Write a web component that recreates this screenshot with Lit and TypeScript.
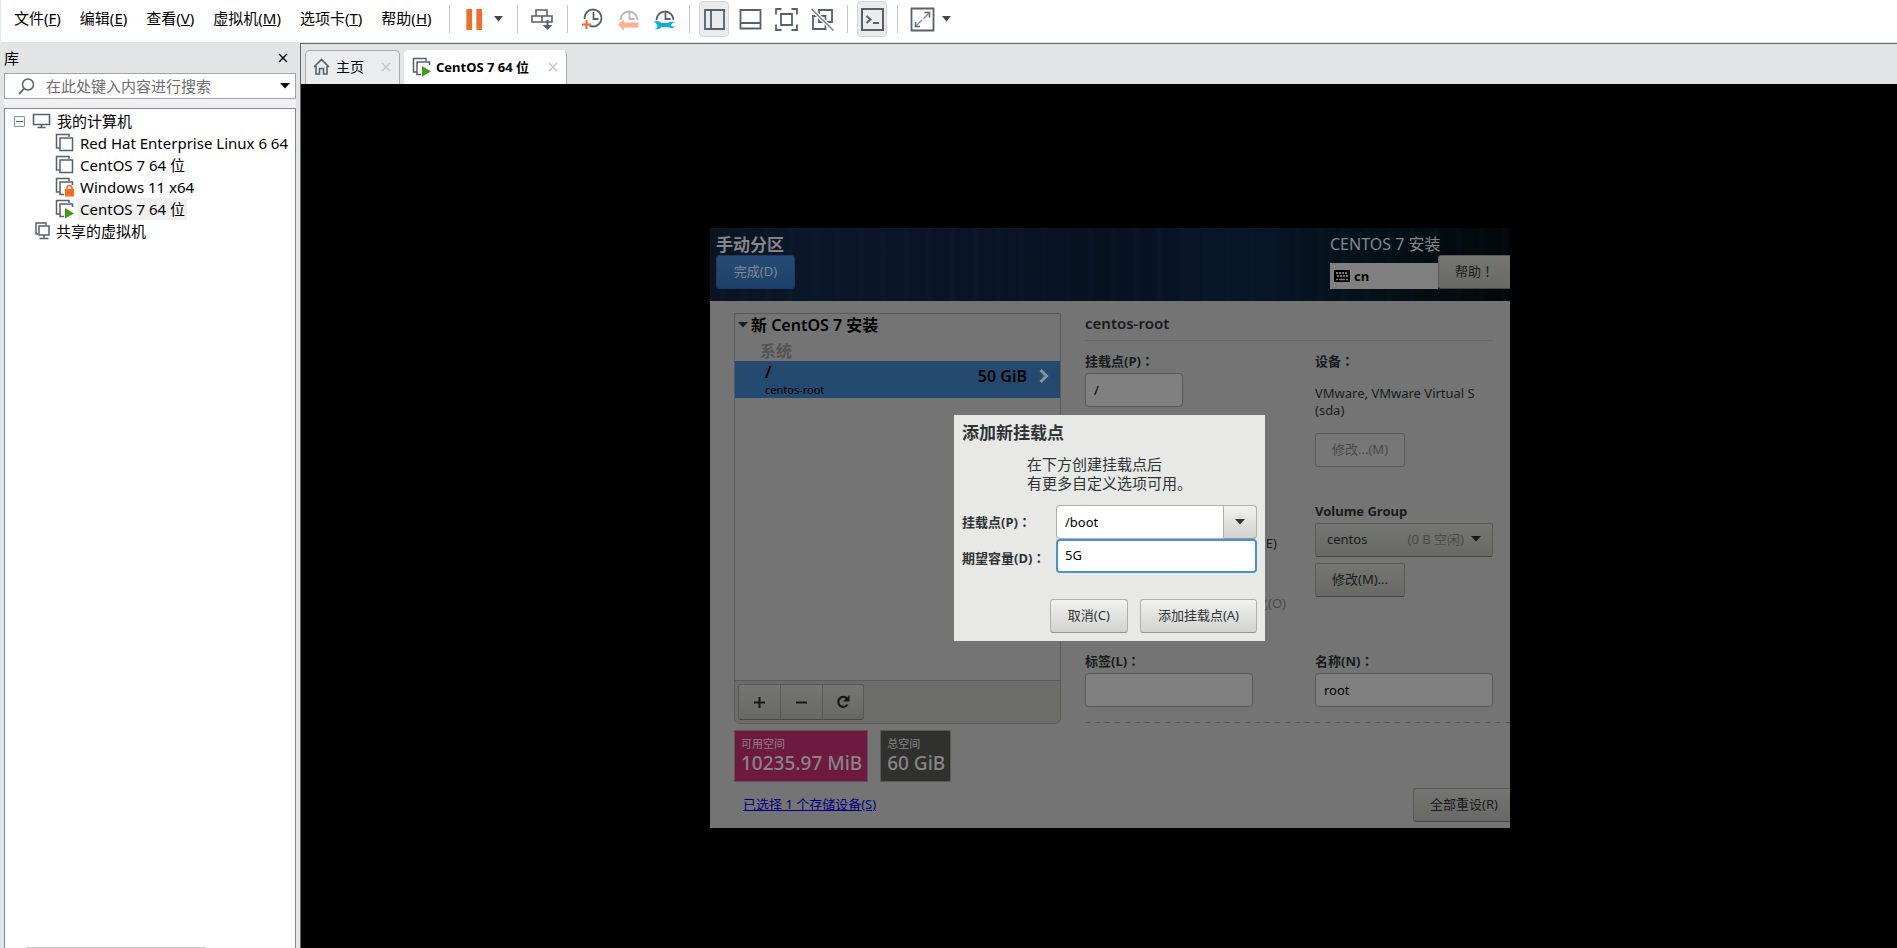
import { LitElement, html, css, svg, nothing } from "lit";
import { customElement } from "lit/decorators.js";
import { classMap } from "lit/directives/class-map.js";

const INK = "#56616b";

const clock = (color: string) => svg`
  <circle cx="13" cy="11" r="8.5" fill="none" stroke=${color} stroke-width="1.8" />
  <path d="M13.500 5v7h5" fill="none" stroke=${color} stroke-width="1.8" />`;

const halfClock = (color: string) => svg`
  <path d="M4.5 13a8.500 8.500 0 1 1 17 0" fill="none" stroke=${color} stroke-width="1.8" />
  <path d="M13.500 5v7h5" fill="none" stroke=${color} stroke-width="1.800" />`;

const vmSheets = svg`
  <path d="M5 15H1.500V1.500H14V4" fill="none" stroke="#56616b" stroke-width="1.500" />
  <rect x="5" y="5" width="12.500" height="12.500" fill="#fff" stroke="#56616b" stroke-width="1.500" />`;

const icons: Record<string, unknown> = {
  pause: svg`<path d="M4 2h6v21H4zM14 2h6v21h-6z" fill="#b9b2ac" /><path d="M5 2h5v21H5zM15 2h5v21h-5z" fill="#ff6a1c" />`,
  send: svg`
    <g fill="#fff" stroke=${INK} stroke-width="1.600">
      <path d="M6 3h11v6H6zM2 9h10v6H2zM12 9h10v6H12z" />
      <path d="M17.500 13v7" stroke-width="2" />
    </g>
    <path d="M12.500 18h10l-5 5z" fill=${INK} />`,
  snapshot: svg`${clock(INK)}
    <path d="M0 12h9.500v11H0z" fill="#fff" />
    <path d="M2 17.500h9M6.500 13v9" stroke="#f06a2c" stroke-width="2" fill="none" />`,
  revert: svg`${halfClock("#b5babf")}
    <path d="M2 17.500l6-5v3h14.500v5H8v3z" fill="#ffb08a" />`,
  manage: svg`${halfClock(INK)}
    <path d="M0 14h25v11H0z" fill="#fff" />
    <path d="M2 14.500q5-1.500 7 1.500h7q2-2 6.500-1l-3 2q-1 1.500.500 2.500h3q-2.500 3-7 .500H9.500q-2.500 3.500-7.500 1.500h2.500q2-2 0-4.500z" fill="#09b1d8" />`,
  library: svg`<g fill="none" stroke=${INK} stroke-width="1.800"><path d="M3 3h19v19H3zM9 3v19" /></g>`,
  thumbs: svg`<g fill="none" stroke=${INK} stroke-width="1.800"><path d="M2.500 3h20v18.500h-20zM2.500 16h20" /></g>`,
  full: svg`<g fill="none" stroke=${INK} stroke-width="1.800">
    <path d="M7 7h11v11H7zM2 7.500V2h5.500M17.500 2H23v5.500M23 17.500V23h-5.500M7.500 23H2v-5.500" /></g>`,
  unity: svg`<g fill="none" stroke=${INK} stroke-width="1.800">
    <path d="M9 3h13v12H9zM3 9h12.500v13H3z" /></g>
    <path d="M1 1.500L23.500 23.500" stroke="#fff" stroke-width="4" /><path d="M1.500 2l22 21.500" stroke="#7d868e" stroke-width="1.700" />`,
  console: svg`<path d="M2 2h21v21H2z" fill="none" stroke=${INK} stroke-width="2" />
    <path d="M6.500 9l4 3.500-4 3.500M13 16h6" fill="none" stroke=${INK} stroke-width="2" />`,
  expand: svg`<path d="M1.500 1.500h22v22h-22z" fill="none" stroke=${INK} stroke-width="1.800" />
    <path d="M14.500 5.500h5v5M10 19.500H5.500V15" fill="none" stroke=${INK} stroke-width="1.500" />
    <path d="M19 6L6 19" stroke="#8a9299" stroke-width="1.500" stroke-dasharray="8 2" />`,
};

@customElement("app-root")
export class AppRoot extends LitElement {
  static styles = css`
    :host {
      display: flex;
      flex-direction: column;
      height: 100vh;
      min-height: 860px;
      overflow: hidden;
      background: #e3e4e6;
      color: #000;
      font: 15px/22px "Noto Sans", "Noto Sans CJK SC", sans-serif;
    }
    * { box-sizing: border-box; }
    button, input, select { font: inherit; color: inherit; margin: 0; }
    button { padding: 0; border: 0; background: none; }
    svg { display: block; flex: none; }
    ul { list-style: none; margin: 0; padding: 0; }

    .menubar {
      display: flex;
      align-items: center;
      flex: none;
      height: 42px;
      padding: 0 0 4px 13px;
      margin-left: 1px;
      background: #fff;
    }
    .menus { display: flex; gap: 19px; width: 425px; padding-bottom: 2px; white-space: nowrap; }
    .sep { width: 1px; height: 28px; margin: 0 9px 0 10px; background: #c6c6c6; }
    .tools { display: flex; gap: 6px; }
    .tool {
      display: grid;
      place-items: center;
      width: 30px;
      height: 36px;
      border-radius: 4px;
    }
    .tool.on { background: #eaebed; border: 1px solid #d4d6d8; }
    .caret { display: grid; place-items: center; width: 18px; height: 36px; }

    .work { display: flex; flex: 1; min-height: 0; }
    .side {
      display: flex;
      flex-direction: column;
      width: 300px;
      flex: none;
      padding: 0 4px;
    }
    .sidehead {
      display: flex;
      justify-content: space-between;
      align-items: center;
      height: 31px;
      padding-right: 8px;
    }
    .search {
      display: flex;
      align-items: center;
      height: 26px;
      width: 292px;
      padding: 0 5px 0 13px;
      border: 1px solid #a0a3a8;
      background: #fff;
    }
    .search input {
      flex: 1;
      min-width: 0;
      padding: 0 0 0 11px;
      border: 0;
      outline: 0;
      background: none;
    }
    .search input::placeholder { color: #6d6d6d; opacity: 1; }
    .gap { height: 9px; background: #f0f0f0; flex: none; width: 292px; }
    .tree {
      flex: 1;
      width: 292px;
      padding: 1px 0 0 9px;
      border: 1px solid #828790;
      border-bottom: 0;
      background: #fff;
      overflow: hidden;
      display: flex;
      flex-direction: column;
      justify-content: space-between;
    }
    .node { display: flex; align-items: center; height: 22px; white-space: nowrap; }
    .node span { padding: 0 2px; }
    .root svg { margin: 0 3px 0 7px; }
    .shared { padding-left: 21px; }
    .shared svg { margin-right: 4px; }
    .leaf { padding-left: 41px; }
    .leaf svg { margin-right: 3px; }
    .leaf.sel span { background: #f0f0f0; }
    .twisty {
      display: flex;
      align-items: center;
      justify-content: center;
      width: 11px;
      height: 11px;
      flex: none;
      border: 1px solid #919191;
      border-radius: 1px;
      background: #f6f6f6;
    }
    .root .twisty svg { margin: 0; }
    .hbar { height: 1px; width: 178px; margin-left: 13px; background: #c8c8c8; }

    .main {
      display: flex;
      flex-direction: column;
      flex: 1;
      min-width: 0;
      margin-top: 1px;
      border-top: 1px solid #646667;
      border-left: 1px solid #646667;
      background: #000;
    }
    .tabs {
      display: flex;
      align-items: flex-end;
      gap: 4px;
      flex: none;
      height: 40px;
      padding-left: 4px;
      background: #e3e4e6;
    }
    .tab {
      display: flex;
      align-items: center;
      height: 34px;
      padding: 0 8px 2px 7px;
      border: 1px solid #a9acb0;
      border-bottom: 0;
      border-radius: 5px 5px 0 0;
      background: #ebecee;
      white-space: nowrap;
    }
    .tab span { margin: 0 17px 0 6px; font-size: 14px; }
    .tab.active { background: #fff; border-left-color: #fff; border-top-color: #fff; }
    .tab.active span { margin: 0 19px 0 4px; font-size: 13px; font-weight: 700; }
    .display {
      display: grid;
      place-items: center;
      flex: 1;
      padding: 24px 0 0 22px;
    }

    /* guest display */
    .guest {
      position: relative;
      display: flex;
      flex-direction: column;
      width: 800px;
      height: 600px;
      overflow: hidden;
      background: #747474;
      color: #181b1c;
      font-size: 13px;
      line-height: 18px;
      white-space: nowrap;
    }
    .mark { font-family: "Noto Sans CJK TC", sans-serif; }
    .banner {
      display: flex;
      justify-content: space-between;
      height: 73px;
      flex: none;
      padding: 5px 0 12px 6px;
      color: #848688;
      background:
        repeating-linear-gradient(90deg, rgba(30, 60, 100, 0) 0 9px, rgba(30, 60, 100, 0.05) 11px 13px, rgba(30, 60, 100, 0) 17px 23px),
        linear-gradient(90deg, #0c1322 0%, #0b172a 12%, #091526 30%, #071221 50%, #071629 65%, #041118 84%, #010809 100%);
    }
    .banner h1 { margin: 0; padding-top: 1px; font-size: 17px; line-height: 21px; font-weight: 700; }
    .brand { font-size: 16px; line-height: 22px; }
    .brandcol { width: 180px; }
    .btn {
      height: 34px;
      padding: 0 16px 2px;
      border: 1px solid #595956;
      border-bottom-color: #484845;
      border-radius: 3px;
      background: linear-gradient(#757573, #686865);
      color: #181b1c;
    }
    .btn.primary {
      width: 79px;
      border-color: #1a3c62;
      background: linear-gradient(#264c76, #1b4069);
      color: #84898f;
    }
    .btn.help { width: 72px; padding: 0 0 2px; border-right: 0; border-radius: 3px 0 0 3px; }
    .btn.off { color: #484a4a; border-color: #5c5c5c; background: #777; }
    .btn.reset { padding: 0 0 2px 16px; width: 97px; text-align: left; border-right: 0; border-radius: 3px 0 0 3px; }
    .kbrow { display: flex; align-items: flex-end; height: 34px; }
    .kb {
      display: flex;
      align-items: center;
      gap: 4px;
      width: 108px;
      height: 26px;
      padding-left: 4px;
      background: #808080;
      color: #000;
      font-weight: 700;
    }
    .content {
      display: grid;
      grid-template-columns: 327px 1fr;
      column-gap: 24px;
      flex: 1;
      padding: 12px 0 6px 24px;
    }
    .left { display: flex; flex-direction: column; }
    .parts {
      display: flex;
      flex-direction: column;
      height: 411px;
      border: 1px solid #5a5a5a;
      border-radius: 0 0 6px 6px;
    }
    .partlist { flex: 1; color: #000; font-size: 16px; font-weight: 600; line-height: 22px; }
    .group { display: flex; align-items: center; gap: 3px; height: 21px; padding-left: 3px; }
    .kind { height: 26px; padding-left: 25px; color: #545454; line-height: 32px; }
    .part {
      display: grid;
      grid-template-columns: 1fr auto 8px;
      column-gap: 12px;
      align-items: center;
      height: 37px;
      padding: 0 13px 0 30px;
      background: #254a6f;
    }
    .part .size { padding-bottom: 8px; }
    .part svg { margin-bottom: 8px; }
    .part .name { line-height: 20px; }
    .part small { display: block; font-size: 11px; line-height: 15px; font-weight: 400; }
    .bar {
      display: flex;
      height: 43px;
      padding: 3px;
      border-top: 1px solid #5a5a5a;
      border-radius: 0 0 5px 5px;
      background: #6c6c69;
    }
    .bar .btn { display: grid; place-items: center; width: 42px; height: 36px; padding: 0; border-radius: 0; border-right-width: 0; }
    .bar .btn:first-child { border-radius: 3px 0 0 3px; }
    .bar .btn:last-child { border-radius: 0 3px 3px 0; border-right-width: 1px; }
    .space { display: flex; gap: 12px; margin-top: 6px; color: #868686; }
    .stat { height: 52px; padding: 5px 5px 5px 6px; border: 1px solid #5d5658; background: #6e193e; }
    .stat.total { background: #30302e; border-color: #5a5a5a; }
    .stat b { display: block; font-size: 19px; line-height: 22px; font-weight: 500; }
    .stat small { display: block; font-size: 11px; line-height: 16px; }
    .link { margin: 13px 0 0 9px; width: max-content; color: #000080; font-size: 13px; }

    .right { display: flex; flex-direction: column; }
    .right h2 {
      margin: 0 17px 0 0;
      height: 28px;
      border-bottom: 1px solid #686868;
      font-size: 15px;
      line-height: 20px;
      font-weight: 600;
    }
    .cols { display: grid; grid-template-columns: 230px 178px; height: 366px; padding-top: 11px; }
    .col { display: flex; flex-direction: column; align-items: flex-start; }
    .lab { font-weight: 700; font-size: 13px; line-height: 18px; height: 21px; }
    .entry {
      height: 34px;
      padding: 0 8px;
      border: 1px solid #595959;
      border-radius: 4px;
      background: #808080;
      color: #000;
      outline: 0;
    }
    .w98 { width: 98px; }
    .w168 { width: 168px; }
    .wfull { width: 100%; }
    .opt { display: flex; align-items: center; justify-content: flex-end; height: 20px; }
    .opt.enc { width: 192px; margin-top: 100px; }
    .opt.fmt { width: 201px; margin-top: 40px; color: #4a4c4c; }
    .opt input { width: 12px; height: 12px; margin-right: 6px; }
    .device { margin: 12px 0 14px; line-height: 17px; }
    .desired { margin-top: 5px; }
    .tail { margin-top: auto; }
    .vg { margin: 35px 0 6px; width: 100%; }
    .combo { display: flex; align-items: center; width: 100%; padding: 0 11px 2px; }
    .combo em { margin: 0 7px 0 auto; font-style: normal; color: #4b4c4c; }
    .rule {
      height: 1px;
      margin-top: 15px;
      background: repeating-linear-gradient(90deg, #575757 0 5px, transparent 5px 10px);
    }
    .resetrow { display: flex; justify-content: flex-end; margin-top: auto; }

    .dialog {
      position: absolute;
      left: 244px;
      top: 187px;
      width: 311px;
      height: 226px;
      padding: 8px;
      background: #e8e8e6;
      color: #2e3436;
    }
    .dialog h3 { margin: 0; font-size: 17px; line-height: 20px; font-weight: 700; }
    .dialog p { margin: 12px 0 12px 65px; font-size: 15px; line-height: 19px; }
    .line { display: grid; grid-template-columns: 94px 1fr; align-items: center; }
    .line label { font-weight: 700; font-size: 13px; }
    .line .low { padding-top: 4px; }
    .pick { display: flex; }
    .dialog .entry { min-width: 0; width: 100%; background: #fff; border-color: #b0b1ae; }
    .pick .entry { border-radius: 4px 0 0 4px; border-right: 0; }
    .dialog .entry.focus { border: 2px solid #4a90d9; padding: 0 7px 2px; }
    .dialog .btn { border-color: #b0b1ae; border-bottom-color: #949592; background: linear-gradient(#f1f1f0, #d2d2cf); color: #2e3436; }
    .pick .btn { display: grid; place-items: center; width: 34px; padding: 0; flex: none; border-radius: 0 4px 4px 0; }
    .acts { display: flex; justify-content: flex-end; gap: 12px; margin-top: 26px; }
    .acts .btn { padding: 0 17px 2px; }
  `;

  private icon(name: string) {
    return html`<svg width="25" height="25" viewBox="0 0 25 25" aria-hidden="true">${icons[name]}</svg>`;
  }

  private tool(name: string, label: string, on = false) {
    return html`<button class=${classMap({ tool: true, on })} aria-label=${label}>${this.icon(name)}</button>`;
  }

  private caret(label: string) {
    return html`<button class="caret" aria-label=${label}>
      <svg width="9" height="6" viewBox="0 0 9 6"><path d="M0 0h9L4.500 5.500z" fill="#3f4a55" /></svg>
    </button>`;
  }

  private arrow(color: string) {
    return html`<svg width="10" height="6" viewBox="0 0 10 6"><path d="M0 0h10L5 5.500z" fill=${color} /></svg>`;
  }

  /** Full-width punctuation, centred in its box as the guest's font draws it. */
  private mark(ch: string) {
    return html`<span class="mark" lang="zh-TW">${ch}</span>`;
  }

  private vmIcon(state?: string) {
    return html`<svg width="20" height="20" viewBox="0 0 20 20" aria-hidden="true">
      ${vmSheets}
      ${state === "run" ? svg`<path d="M9 8h10v12H9z" fill="#fff" /><path d="M10 9l9 5.500-9 5z" fill="#3f9c14" />` : nothing}
      ${state === "lock"
        ? svg`<path d="M9 8h10v12H9z" fill="#fff" /><path d="M10 12h9v7.500h-9z" fill="#ff6a1c" />
            <path d="M12 12.500v-1.500a2.500 2.500 0 0 1 5 0v1.500" fill="none" stroke="#ff6a1c" stroke-width="1.500" />`
        : nothing}
    </svg>`;
  }

  private cross(color: string, size: number) {
    return html`<svg width=${size} height=${size} viewBox="0 0 10 10">
      <path d="M1 1l8 8M9 1l-8 8" fill="none" stroke=${color} stroke-width="1.400" />
    </svg>`;
  }

  private menu() {
    const items = [
      ["文件", "F"], ["编辑", "E"], ["查看", "V"], ["虚拟机", "M"], ["选项卡", "T"], ["帮助", "H"],
    ];
    return html`<header class="menubar" lang="zh-CN">
      <nav class="menus">${items.map(([t, k]) => html`<button>${t}(<u>${k}</u>)</button>`)}</nav>
      <i class="sep"></i>
      ${this.tool("pause", "挂起")}${this.caret("电源选项")}
      <i class="sep"></i>
      ${this.tool("send", "发送 Ctrl+Alt+Del")}
      <i class="sep"></i>
      <div class="tools">
        ${this.tool("snapshot", "拍摄快照")}${this.tool("revert", "恢复快照")}${this.tool("manage", "管理快照")}
      </div>
      <i class="sep"></i>
      <div class="tools">
        ${this.tool("library", "显示库", true)}${this.tool("thumbs", "缩略图栏")}${this.tool("full", "全屏")}${this.tool("unity", "Unity")}
      </div>
      <i class="sep"></i>
      ${this.tool("console", "控制台视图", true)}
      <i class="sep"></i>
      ${this.tool("expand", "自由拉伸")}${this.caret("拉伸选项")}
    </header>`;
  }

  private sidebar() {
    const vms: [string, string?][] = [
      ["Red Hat Enterprise Linux 6 64"],
      ["CentOS 7 64 位"],
      ["Windows 11 x64", "lock"],
      ["CentOS 7 64 位", "run"],
    ];
    return html`<aside class="side">
      <div class="sidehead"><span>库</span><button aria-label="关闭库">${this.cross("#000", 10)}</button></div>
      <div class="search">
        <svg width="17" height="17" viewBox="0 0 17 17">
          <circle cx="10" cy="6.500" r="5.500" fill="none" stroke="#56616b" stroke-width="1.500" />
          <path d="M6 10.500L1 16" stroke="#56616b" stroke-width="1.800" />
        </svg>
        <input type="search" aria-label="搜索" placeholder="在此处键入内容进行搜索" />
        <button aria-label="搜索选项">${this.arrow("#000")}</button>
      </div>
      <div class="gap"></div>
      <div class="tree">
        <ul>
          <li>
            <div class="node root">
              <button class="twisty" aria-label="折叠"><svg width="7" height="1"><path d="M0 0h7v1H0z" fill="#4a62a8" /></svg></button>
              <svg width="20" height="16" viewBox="0 0 20 16">
                <path d="M1.500 1.500h16v10h-16z" fill="none" stroke="#56616b" stroke-width="1.600" />
                <path d="M9.500 11.500V14M5.500 14.500h8" stroke="#56616b" stroke-width="1.600" />
              </svg>
              <span>我的计算机</span>
            </div>
            <ul>
              ${vms.map(([name, state]) => html`<li class=${classMap({ node: true, leaf: true, sel: state === "run" })}>
                ${this.vmIcon(state)}<span>${name}</span>
              </li>`)}
            </ul>
          </li>
          <li class="node shared">
            <svg width="15" height="18" viewBox="0 0 15 18">
              <path d="M3 12H1V1h10v2M4 4h10v9H4zM9 13v3M4.500 16.500h9" fill="none" stroke="#56616b" stroke-width="1.500" />
            </svg>
            <span>共享的虚拟机</span>
          </li>
        </ul>
        <div class="hbar"></div>
      </div>
    </aside>`;
  }

  private tabs() {
    return html`<div class="tabs">
      <div class="tab">
        <svg width="17" height="17" viewBox="0 0 17 17">
          <path d="M1 9L8.500 1.500 16 9M3 8v8h3.500v-5.500h4V16H14V8" fill="none" stroke="#56616b" stroke-width="1.600" />
        </svg>
        <span>主页</span>
        <button aria-label="关闭">${this.cross("#c3c4c6", 10)}</button>
      </div>
      <div class="tab active">
        ${this.vmIcon("run")}
        <span>CentOS 7 64 位</span>
        <button aria-label="关闭">${this.cross("#c3c4c6", 10)}</button>
      </div>
    </div>`;
  }

  private partitions() {
    return html`<section class="left">
      <div class="parts">
        <div class="partlist">
          <div class="group">${this.arrow("#1a1e20")}<span>新 CentOS 7 安装</span></div>
          <div class="kind">系统</div>
          <div class="part">
            <div class="name">/<small>centos-root</small></div>
            <span class="size">50 GiB</span>
            <svg width="10" height="16" viewBox="0 0 10 16"><path d="M1.500 2l6 6-6 6" fill="none" stroke="#8b9299" stroke-width="3" /></svg>
          </div>
        </div>
        <div class="bar">
          <button class="btn" aria-label="添加"><svg width="11" height="11"><path d="M0 5.500h11M5.500 0v11" stroke="#141818" stroke-width="2" /></svg></button>
          <button class="btn" aria-label="删除"><svg width="11" height="11"><path d="M0 5.500h11" stroke="#141818" stroke-width="2" /></svg></button>
          <button class="btn" aria-label="刷新">
            <svg width="14" height="14" viewBox="0 0 14 14">
              <path d="M11.500 9.500a5 5 0 1 1-.500-6" fill="none" stroke="#141818" stroke-width="2.200" />
              <path d="M13.500 0v6.500H7z" fill="#141818" />
            </svg>
          </button>
        </div>
      </div>
      <div class="space">
        <div class="stat"><small>可用空间</small><b>10235.97 MiB</b></div>
        <div class="stat total"><small>总空间</small><b>60 GiB</b></div>
      </div>
      <a class="link" href="#">已选择 1 个存储设备(S)</a>
    </section>`;
  }

  private details() {
    return html`<section class="right">
      <h2>centos-root</h2>
      <div class="cols">
        <div class="col">
          <label class="lab" for="mp">挂载点(P)${this.mark("：")}</label>
          <input class="entry w98" id="mp" value="/" />
          <span class="lab desired">期望容量(D)${this.mark("：")}</span>
          <label class="opt enc"><input type="checkbox" />(E)</label>
          <label class="opt fmt"><input type="checkbox" disabled />化(O)</label>
          <label class="lab tail" for="tag">标签(L)${this.mark("：")}</label>
          <input class="entry w168" id="tag" />
        </div>
        <div class="col">
          <span class="lab">设备${this.mark("：")}</span>
          <div class="device">VMware, VMware Virtual S<br />(sda)</div>
          <button class="btn off" disabled>修改...(M)</button>
          <div class="vg">
            <div class="lab">Volume Group</div>
            <button class="btn combo">centos<em>(0 B 空闲)</em>${this.arrow("#141818")}</button>
          </div>
          <button class="btn">修改(M)...</button>
          <label class="lab tail" for="nm">名称(N)${this.mark("：")}</label>
          <input class="entry wfull" id="nm" value="root" />
        </div>
      </div>
      <div class="rule"></div>
      <div class="resetrow"><button class="btn reset">全部重设(R)</button></div>
    </section>`;
  }

  private dialog() {
    return html`<div class="dialog" role="dialog" aria-labelledby="dt">
      <h3 id="dt">添加新挂载点</h3>
      <p>在下方创建挂载点后<br />有更多自定义选项可用。</p>
      <div class="line">
        <label for="nmp">挂载点(P)${this.mark("：")}</label>
        <div class="pick">
          <input class="entry" id="nmp" value="/boot" />
          <button class="btn" aria-label="选择挂载点">${this.arrow("#2e3436")}</button>
        </div>
      </div>
      <div class="line">
        <label class="low" for="cap">期望容量(D)${this.mark("：")}</label>
        <input class="entry focus" id="cap" value="5G" />
      </div>
      <div class="acts">
        <button class="btn">取消(C)</button>
        <button class="btn">添加挂载点(A)</button>
      </div>
    </div>`;
  }

  render() {
    return html`
      ${this.menu()}
      <div class="work" lang="zh-CN">
        ${this.sidebar()}
        <main class="main">
          ${this.tabs()}
          <div class="display">
            <div class="guest">
              <div class="banner">
                <div><h1>手动分区</h1><button class="btn primary">完成(D)</button></div>
                <div class="brandcol">
                  <div class="brand">CENTOS 7 安装</div>
                  <div class="kbrow">
                    <div class="kb">
                      <svg width="16" height="12" viewBox="0 0 16 12">
                        <rect width="16" height="12" rx="1" fill="#000" />
                        <path d="M2 3h12M3 6h12" stroke="#808080" stroke-width="2" stroke-dasharray="2 1" />
                        <path d="M2 9.500h2M5 9.500h6M12 9.500h2" stroke="#808080" stroke-width="1.500" />
                      </svg>cn
                    </div>
                    <button class="btn help">帮助${this.mark("！")}</button>
                  </div>
                </div>
              </div>
              <div class="content">${this.partitions()}${this.details()}</div>
              ${this.dialog()}
            </div>
          </div>
        </main>
      </div>
    `;
  }
}
